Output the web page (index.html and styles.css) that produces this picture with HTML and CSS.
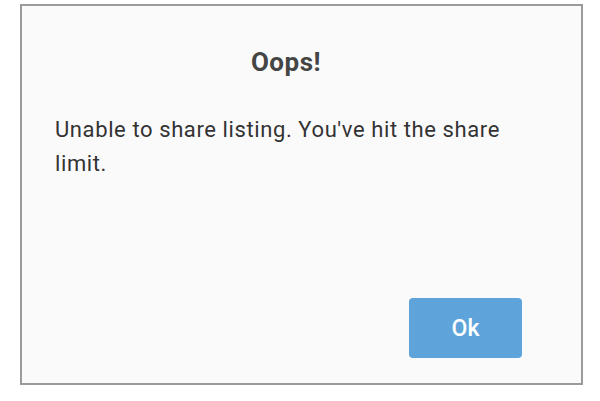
FILE: index.html
```html
<!DOCTYPE html>
<html>
<head>
<meta charset="utf-8">
<link rel="stylesheet" href="styles.css">
</head>
<body>
<div class="dialog">
  <h1 class="title">Oops!</h1>
  <p class="message">Unable to share listing. You've hit the share limit.</p>
  <div class="actions">
    <button class="ok">Ok</button>
  </div>
</div>
</body>
</html>
```
FILE: styles.css
```css
html, body {
  margin: 0;
  padding: 0;
  background: #ffffff;
}
body {
  font-family: Roboto, "Liberation Sans", sans-serif;
}
.dialog {
  box-sizing: border-box;
  margin: 4px 0 0 20px;
  width: 563px;
  height: 381px;
  border: 2px solid #9b9b9b;
  background: #fbfafb;
  display: flex;
  flex-direction: column;
  padding: 0 59px 0 33px;
}
.title {
  margin: 41px 0 0 0;
  padding-right: 5px;
  text-align: center;
  font-size: 26px;
  line-height: 30px;
  font-weight: 700;
  letter-spacing: 0.5px;
  color: #454545;
}
.message {
  margin: 36px 0 0 0;
  font-size: 22px;
  line-height: 34px;
  letter-spacing: 0.6px;
  color: #333333;
}
.actions {
  margin-top: auto;
  margin-bottom: 25px;
  display: flex;
  justify-content: flex-end;
}
.ok {
  width: 113px;
  height: 60px;
  border: none;
  border-radius: 4px;
  background: #5ea3da;
  color: #ffffff;
  font-family: Roboto, "Liberation Sans", sans-serif;
  font-size: 23px;
  font-weight: 500;
}
```
